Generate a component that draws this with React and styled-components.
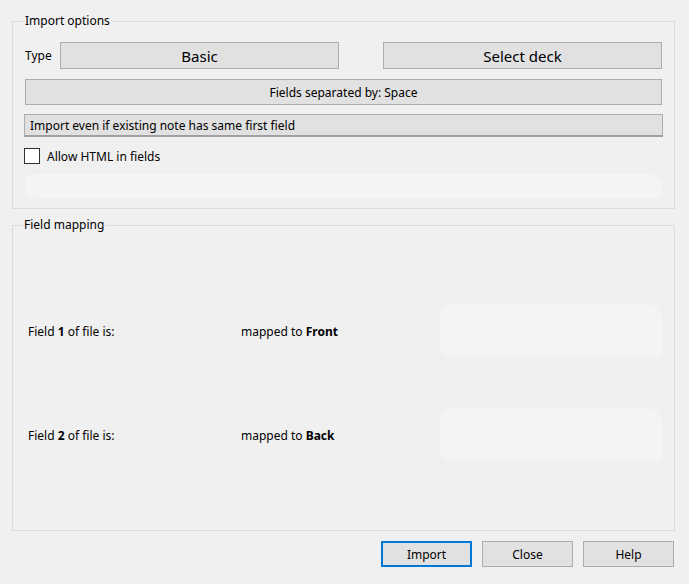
import React from 'react';
import styled, { createGlobalStyle } from 'styled-components';

const GlobalStyle = createGlobalStyle`
  html, body {
    margin: 0;
    padding: 0;
    background: #f0f0f0;
  }
  body {
    font-family: "Noto Sans", "Liberation Sans", Arial, sans-serif;
    font-size: 12px;
    color: #000;
  }
`;

const Window = styled.div`
  width: 689px;
  height: 584px;
  box-sizing: border-box;
  padding: 14px 14px 0 12px;
  background: #f0f0f0;
  display: flex;
  flex-direction: column;
  overflow: hidden;
`;

const GroupBox = styled.fieldset`
  margin: 0;
  padding: ${p => p.$pad || '14px 12px 8px 12px'};
  border: 1px solid #dcdcdc;
  min-width: 0;
  box-sizing: border-box;
  height: ${p => p.$height};
  & + & {
    margin-top: 9px;
  }
`;

const Legend = styled.legend`
  padding: 0 1px;
  margin-left: ${p => p.$shift || '-1px'};
  font-size: 12px;
  line-height: 14px;
`;

const Column = styled.div`
  display: flex;
  flex-direction: column;
`;

const TypeRow = styled.div`
  display: flex;
  align-items: center;
  height: 27px;
`;

const TypeLabel = styled.span`
  width: 35px;
  flex-shrink: 0;
`;

const Spacer = styled.div`
  width: 44px;
  flex-shrink: 0;
`;

const PushButton = styled.button`
  font-family: inherit;
  font-size: ${p => p.$big ? '15px' : '12px'};
  color: #000;
  background: #e1e1e1;
  border: 1px solid #adadad;
  box-sizing: border-box;
  height: ${p => p.$h || '27px'};
  flex: ${p => p.$fixed ? 'none' : '1'};
  margin-top: ${p => p.$top || '0'};
  padding: 0;
  cursor: default;
`;

const ComboBox = styled.div`
  margin-top: 9px;
  height: 23px;
  margin-left: -1px;
  margin-right: -1px;
  box-sizing: border-box;
  background: #e1e1e1;
  border: 1px solid #adadad;
  border-bottom: 2px solid #a0a0a0;
  display: flex;
  align-items: center;
  padding-left: 5px;
`;

const CheckRow = styled.label`
  margin-top: 11px;
  margin-left: -1px;
  display: flex;
  align-items: center;
  gap: 7px;
  height: 16px;
`;

const CheckBox = styled.span`
  width: 16px;
  height: 16px;
  box-sizing: border-box;
  border: 1px solid #333;
  background: #fff;
`;

const Smudge = styled.div`
  height: ${p => p.$h || '22px'};
  margin-top: ${p => p.$top || '0'};
  background: #f4f4f4;
  border-radius: 8px 14px 6px 12px;
`;

const MappingGrid = styled.div`
  display: grid;
  grid-template-columns: 213px 199px 1fr;
  grid-auto-rows: 104px;
  align-items: center;
  padding: 47px 0 0 3px;
`;

const Cell = styled.span`
  white-space: nowrap;
`;

const Footer = styled.div`
  display: flex;
  justify-content: flex-end;
  gap: 10px;
  margin-top: 10px;
  padding-right: 1px;
`;

const DialogButton = styled.button`
  width: 91px;
  height: 26px;
  box-sizing: border-box;
  font-family: inherit;
  font-size: 12px;
  color: #000;
  background: #e1e1e1;
  border: ${p => p.$default ? '2px solid #0078d7' : '1px solid #adadad'};
  padding: 0;
  cursor: default;
`;

const fields = [
  { n: 1, target: 'Front' },
  { n: 2, target: 'Back' },
];

export default function App() {
  return (
    <>
      <GlobalStyle />
      <Window>
        <GroupBox $height="195px">
          <Legend>Import options</Legend>
          <Column>
            <TypeRow>
              <TypeLabel>Type</TypeLabel>
              <PushButton $big>Basic</PushButton>
              <Spacer />
              <PushButton $big>Select deck</PushButton>
            </TypeRow>
            <PushButton $h="26px" $fixed $top="10px">
              Fields separated by: Space
            </PushButton>
            <ComboBox>Import even if existing note has same first field</ComboBox>
            <CheckRow>
              <CheckBox />
              Allow HTML in fields
            </CheckRow>
            <Smudge $top="10px" $h="24px" />
          </Column>
        </GroupBox>

        <GroupBox $height="313px" $pad="0 12px 0 12px">
          <Legend $shift="-2px">Field mapping</Legend>
          <MappingGrid>
            {fields.map(f => (
              <React.Fragment key={f.n}>
                <Cell>Field <b>{f.n}</b> of file is:</Cell>
                <Cell>mapped to <b>{f.target}</b></Cell>
                <Smudge $h="52px" />
              </React.Fragment>
            ))}
          </MappingGrid>
        </GroupBox>

        <Footer>
          <DialogButton $default>Import</DialogButton>
          <DialogButton>Close</DialogButton>
          <DialogButton>Help</DialogButton>
        </Footer>
      </Window>
    </>
  );
}
